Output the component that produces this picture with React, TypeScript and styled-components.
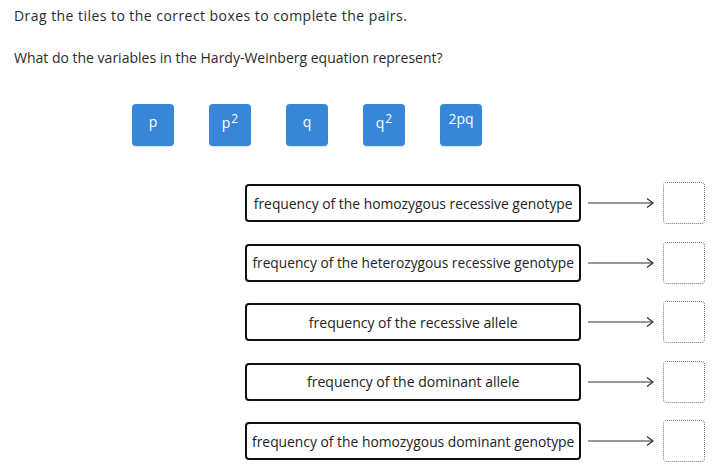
import React from "react";
import styled, { createGlobalStyle } from "styled-components";

const GlobalStyle = createGlobalStyle`
  html, body {
    margin: 0;
    padding: 0;
    background: #ffffff;
  }
  body {
    font-family: "Open Sans", "Liberation Sans", sans-serif;
    color: #222;
  }
`;

const Page = styled.div`
  padding: 6px 14px 0 14px;
  width: 719px;
  height: 471px;
  box-sizing: border-box;
  overflow: hidden;
`;

const Prompt = styled.p<{ $spacing?: number }>`
  margin: 0 0 23px 0;
  font-size: 14px;
  line-height: 19px;
  color: #2b2b2b;
  white-space: nowrap;
  letter-spacing: ${(p) => p.$spacing || 0}px;
`;

const TileRow = styled.div`
  display: flex;
  gap: 35px;
  padding: 14px 0 0 118px;
`;

const Tile = styled.div<{ $top: number }>`
  width: 42px;
  height: 42px;
  border-radius: 4px;
  background: #3886d7;
  color: #fff;
  font-size: 14px;
  line-height: 18px;
  text-align: center;
  box-sizing: border-box;
  padding-top: ${(p) => p.$top}px;
  box-shadow: 0 1px 1px rgba(0, 0, 0, 0.12);
  cursor: grab;

  sup {
    font-size: 12px;
    line-height: 0;
    vertical-align: 5px;
    margin-left: 1px;
  }
`;

const PairList = styled.div`
  display: flex;
  flex-direction: column;
  gap: 17.5px;
  margin: 36px 0 0 231px;
`;

const PairRow = styled.div`
  display: flex;
  align-items: center;
  height: 42px;
`;

const Term = styled.div<{ $size: number }>`
  width: 340px;
  height: 38px;
  box-sizing: border-box;
  border: 2px solid #111;
  border-radius: 4px;
  display: flex;
  align-items: center;
  justify-content: center;
  font-size: ${(p) => p.$size}px;
  color: #222;
  white-space: nowrap;
`;

const Arrow = styled.svg`
  width: 66px;
  height: 12px;
  margin: 0 9px 0 7px;
  flex: none;
`;

const DropZone = styled.div`
  width: 42px;
  height: 42px;
  box-sizing: border-box;
  border: 1px dotted #777;
  border-radius: 4px;
`;

const tiles = [
  { label: <>p</>, top: 9 },
  { label: <>p<sup>2</sup></>, top: 10 },
  { label: <>q</>, top: 9 },
  { label: <>q<sup>2</sup></>, top: 10 },
  { label: <>2pq</>, top: 6 },
];

const terms = [
  { text: "frequency of the homozygous recessive genotype", size: 13.85 },
  { text: "frequency of the heterozygous recessive genotype", size: 13.75 },
  { text: "frequency of the recessive allele", size: 14 },
  { text: "frequency of the dominant allele", size: 14 },
  { text: "frequency of the homozygous dominant genotype", size: 13.85 },
];

const App = () => {
  return (
    <Page>
      <GlobalStyle />
      <Prompt $spacing={0.45}>Drag the tiles to the correct boxes to complete the pairs.</Prompt>
      <Prompt>What do the variables in the Hardy-Weinberg equation represent?</Prompt>

      <TileRow>
        {tiles.map((t, i) => (
          <Tile key={i} $top={t.top}>
            {t.label}
          </Tile>
        ))}
      </TileRow>

      <PairList>
        {terms.map((term) => (
          <PairRow key={term.text}>
            <Term $size={term.size}>{term.text}</Term>
            <Arrow viewBox="0 0 66 12">
              <line x1="0" y1="6" x2="65" y2="6" stroke="#333" strokeWidth="1" />
              <polyline points="59,1.5 65,6 59,10.5" fill="none" stroke="#333" strokeWidth="1.3" />
            </Arrow>
            <DropZone />
          </PairRow>
        ))}
      </PairList>
    </Page>
  );
};

export default App;
